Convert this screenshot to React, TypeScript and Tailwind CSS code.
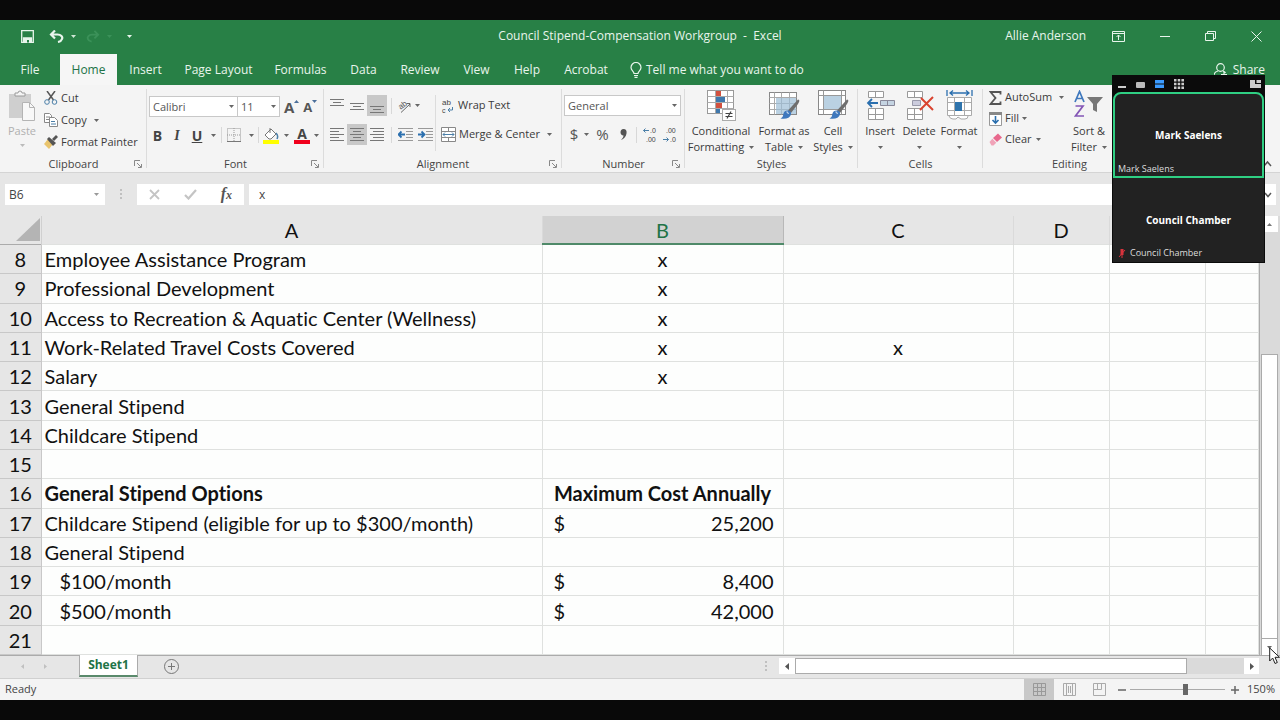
import { useState } from 'react'
import type { ReactNode } from 'react'

interface Row {
  n: number
  a?: string
  b?: string
  c?: string
  cost?: string
  bold?: boolean
  indent?: boolean
}

const ROWS: Row[] = [
  { n: 8, a: 'Employee Assistance Program', b: 'x' },
  { n: 9, a: 'Professional Development', b: 'x' },
  { n: 10, a: 'Access to Recreation & Aquatic Center (Wellness)', b: 'x' },
  { n: 11, a: 'Work-Related Travel Costs Covered', b: 'x', c: 'x' },
  { n: 12, a: 'Salary', b: 'x' },
  { n: 13, a: 'General Stipend' },
  { n: 14, a: 'Childcare Stipend' },
  { n: 15 },
  { n: 16, a: 'General Stipend Options', b: 'Maximum Cost Annually', bold: true },
  { n: 17, a: 'Childcare Stipend (eligible for up to $300/month)', cost: '25,200' },
  { n: 18, a: 'General Stipend' },
  { n: 19, a: '$100/month', cost: '8,400', indent: true },
  { n: 20, a: '$500/month', cost: '42,000', indent: true },
  { n: 21 },
]

const TABS = [
  { label: 'File', width: 'w-[60px]' },
  { label: 'Home', width: 'w-[57px]' },
  { label: 'Insert', width: 'w-[57px]' },
  { label: 'Page Layout', width: 'w-[89px]' },
  { label: 'Formulas', width: 'w-[75px]' },
  { label: 'Data', width: 'w-[51px]' },
  { label: 'Review', width: 'w-[62px]' },
  { label: 'View', width: 'w-[51px]' },
  { label: 'Help', width: 'w-[50px]' },
  { label: 'Acrobat', width: 'w-[68px]' },
]

function Caret({ className = 'text-[#666]' }: { className?: string }) {
  return (
    <svg width="5" height="3" viewBox="0 0 5 3" className={`shrink-0 ${className}`}>
      <path d="M0 0h5L2.5 3z" fill="currentColor" />
    </svg>
  )
}

function Sep() {
  return <span className="w-px h-4 bg-[#d8d8d8] shrink-0" />
}

function Group({ label, width, launcher, children }: { label: string; width: string; launcher?: boolean; children: ReactNode }) {
  return (
    <section className={`flex flex-col shrink-0 relative ${width}`}>
      <div className="h-[71px]">{children}</div>
      <div className="h-4 leading-4 text-center text-[#444]">{label}</div>
      <span className="absolute right-0 top-1 bottom-1 w-px bg-[#dcdcdc]" />
      {launcher && (
        <button aria-label={`${label} settings`} className="absolute right-[5px] bottom-1">
          <svg width="8" height="8" viewBox="0 0 8 8" fill="none" stroke="#888">
            <path d="M.5 6V.5H6M3 3l4 4M7.5 4v3.5H4" />
          </svg>
        </button>
      )}
    </section>
  )
}

function Combo({ value, label, className }: { value: string; label: string; className: string }) {
  return (
    <div className={`relative h-[21px] ${className}`}>
      <select
        aria-label={label}
        className="appearance-none w-full h-full pl-[3px] bg-white border border-[#c8c8c8] text-[#555] leading-[18px]"
      >
        <option>{value}</option>
      </select>
      <span className="absolute right-1 top-[9px] pointer-events-none"><Caret /></span>
    </div>
  )
}

function BigButton({ icon, lines, width }: { icon: ReactNode; lines: string[]; width: string }) {
  return (
    <button className={`flex flex-col items-center shrink-0 whitespace-nowrap ${width}`}>
      <span className="h-[33px] flex items-start justify-center">{icon}</span>
      <span className="h-4 leading-4">{lines[0]}</span>
      <span className="h-4 leading-4 flex items-center gap-[5px]">
        {lines[1]}
        <Caret />
      </span>
    </button>
  )
}

// horizontal rules used by all six alignment buttons
function LinesIcon({ rows }: { rows: [number, number, number][] }) {
  return (
    <svg width="14" height="16" viewBox="0 0 14 16" stroke="#777">
      {rows.map(([x1, x2, y]) => (
        <path key={y} d={`M${x1} ${y}H${x2}`} />
      ))}
    </svg>
  )
}

function IndentIcon({ right }: { right?: boolean }) {
  return (
    <svg width="15" height="16" viewBox="0 0 15 16" fill="none">
      <path d="M0 1.5h15M8 4.5h7M8 7.5h7M8 10.5h7M0 13.5h15" stroke="#999" />
      <path d={right ? 'M0 7.5h6M3.5 4.5l3 3-3 3' : 'M7 7.5H1M3.5 4.5l-3 3 3 3'} stroke="#2b6fae" strokeWidth="1.8" />
    </svg>
  )
}

function Brush() {
  return (
    <>
      <path d="M29 9.500c2 .5 1.500 2 0 4.500l-7 9-3-2.500z" fill="#6e6e6e" />
      <path d="M18.500 20.500c3 0 4 2 3.500 4-1 3.500-5 5-10.500 4 2.500-1 2.500-3 3-5 .5-2 2-3 4-3z" fill="#3f78bd" />
      <path d="M17.500 22c1.500 0 2 1 1.500 2" fill="none" stroke="#fff" />
    </>
  )
}

function TableStyleIcon({ cell }: { cell?: boolean }) {
  return (
    <svg width="31" height="31" viewBox="0 0 31 31">
      <rect x=".5" y={cell ? 0.5 : 2.5} width="27" height={cell ? 24 : 22} fill="#fff" stroke="#888" />
      {cell ? (
        <path d="M.5 5.500h27M5.500.5v24M.5 19.500h27M23.500.5v24" stroke="#999" />
      ) : (
        <path d="M.5 7.500h27M5.500 2.500v22M.5 13.500h27M.5 19.500h27M12.500 2.500v22M20.500 2.500v22" stroke="#aaa" />
      )}
      <rect x={cell ? 6 : 7} y={cell ? 6 : 8} width={cell ? 17 : 20} height={cell ? 13 : 16} fill="#9dbdd6" opacity=".7" />
      <Brush />
    </svg>
  )
}

function CondIcon() {
  return (
    <svg width="29" height="31" viewBox="0 0 29 31">
      <rect x=".5" y=".5" width="26" height="23" fill="#fff" stroke="#999" />
      <path d="M.5 6.500h26M.5 12.500h26M.5 18.500h26M8.500 .5v23M20.500 .5v23" stroke="#aaa" />
      <path d="M9 1h5v5H9zM9 13h6v5H9z" fill="#d2513f" />
      <path d="M9 7h9v5H9zM9 19h4v4H9z" fill="#3f78ad" />
      <rect x="15.500" y="19.500" width="13" height="11" fill="#fff" stroke="#aaa" />
      <path d="M18.500 23.500h7M18.500 26.500h7M24 21.500l-4 7" stroke="#444" strokeWidth="1.200" />
    </svg>
  )
}

function InsertIcon({ remove }: { remove?: boolean }) {
  return (
    <svg width="29" height="31" viewBox="0 0 29 31" fill="none">
      <path d="M2.500 1.500h15v6h-15zM9.500 1.500v6M2.500 18.500h15v11h-15zM9.500 18.500v11M2.500 24.500h15" fill="#fff" stroke="#999" />
      {remove ? (
        <>
          <path d="M7.500 10.500h8v5h-8z" fill="#ccd" stroke="#99a" />
          <path d="M16 8l12 12M28 7L15 20" stroke="#d9432f" strokeWidth="2" />
        </>
      ) : (
        <>
          <path d="M14.500 10.500h14v5h-14zM21.500 10.500v5" fill="#c5d4e2" stroke="#889" />
          <path d="M12 13H2M6 9l-4 4 4 4" stroke="#2b6fae" strokeWidth="1.800" />
        </>
      )}
    </svg>
  )
}

function FormatIcon() {
  return (
    <svg width="27" height="31" viewBox="0 0 27 31" fill="none">
      <path d="M1 0v6M26 0v6M4 3h19M7 .5L4 3l3 2.500M20 .5L23 3l-3 2.500" stroke="#2b6fae" strokeWidth="1.300" />
      <path d="M1.500 7.500h24v18h-24zM1.500 12.500h24M1.500 20.500h24M8.500 7.500v18M18.500 7.500v18" fill="#fff" stroke="#aaa" />
      <path d="M9 12h7v9H9z" fill="#2f74ad" />
      <path d="M3 26q1 3 4 3h3l2-2 3 2h4q3 0 3-3" fill="#fff" stroke="#aaa" />
    </svg>
  )
}

function Ribbon() {
  return (
    <div className="flex shrink-0 h-[88px] bg-[#f4f4f4] border-b border-[#d4d4d4] text-[#3b3b3b] relative overflow-hidden">
      <Group label="Clipboard" width="w-[147px]" launcher>
        <div className="flex pt-[5px]">
          <button className="w-11 flex flex-col items-center text-[#b0b0b0]">
            <svg width="28" height="32" viewBox="0 0 28 32">
              <rect x="1" y="4" width="22" height="24" fill="#cfcfcf" />
              <path d="M7 6V3h3a2 2 0 014 0h3v3z" fill="#f4f4f4" stroke="#9a9a9a" />
              <path d="M14.500 12.500h7l5 5v13h-12z" fill="#f8f8f8" stroke="#b4b4b4" />
              <path d="M21.500 12.500v5h5" fill="none" stroke="#b4b4b4" />
            </svg>
            <span className="h-[18px] leading-[18px]">Paste</span>
            <Caret className="text-[#bbb] mt-1" />
          </button>
          <div className="flex flex-col -mt-[3px]">
            <button className="flex items-center gap-[3px] h-[22px]">
              <svg width="14" height="14" viewBox="0 0 14 14" fill="none">
                <path d="M3 0l6.500 9M11 0L4.500 9" stroke="#555" strokeWidth="1.500" />
                <circle cx="3" cy="11" r="2.300" stroke="#4b7fa8" />
                <circle cx="10.500" cy="11" r="2.300" stroke="#4b7fa8" />
              </svg>
              Cut
            </button>
            <button className="flex items-center gap-[3px] h-[22px]">
              <svg width="14" height="14" viewBox="0 0 14 14" fill="#fff" stroke="#888">
                <path d="M.5.5h5l2 2v7h-7zM2 4h4M2 6.500h4" />
                <path d="M5.500 4.500h5l3 3v6h-8z" />
                <path d="M7 8.500h4M7 11h5" stroke="#4b7fa8" />
              </svg>
              Copy
              <Caret className="ml-1 text-[#666]" />
            </button>
            <button className="flex items-center gap-[3px] h-[22px] whitespace-nowrap">
              <svg width="14" height="14" viewBox="0 0 14 14">
                <path d="M0 9l4-5 5 5-4 5z" fill="#e9c46d" />
                <path d="M3 4l2-2 7 6-3 3z" fill="#555" />
                <path d="M8 4l4-4 2 2-4 4z" fill="#555" />
              </svg>
              Format Painter
            </button>
          </div>
        </div>
      </Group>

      <Group label="Font" width="w-[177px]" launcher>
        <div className="flex flex-col gap-2 pt-[11px] pl-[2px]">
          <div className="flex items-center h-[21px]">
            <Combo label="Font" value="Calibri" className="w-[89px]" />
            <Combo label="Font size" value="11" className="w-[43px] -ml-px" />
            <button className="ml-1 font-bold text-[15px] leading-5 text-[#555] flex" aria-label="Increase font size">
              A<Caret className="mt-[3px] text-[#4b6f9a] rotate-180" />
            </button>
            <button className="ml-1 font-bold text-[13px] leading-5 text-[#555] flex" aria-label="Decrease font size">
              A<Caret className="mt-[3px] text-[#4b6f9a]" />
            </button>
          </div>
          <div className="flex items-center h-5 text-[#444] text-[14px]">
            <button className="w-[17px] font-bold">B</button>
            <button className="w-[22px] font-bold italic font-['Liberation_Serif',serif]">I</button>
            <button className="w-[18px] font-bold underline">U</button>
            <span className="w-[15px] flex justify-center"><Caret /></span>
            <Sep />
            <button className="w-[23px] flex justify-center" aria-label="Borders">
              <svg width="14" height="14" viewBox="0 0 14 14" fill="none" stroke="#999">
                <path d="M.5.5h13v13H.5zM7 0v14M0 7h14" strokeDasharray="1 1" />
                <path d="M0 13.500h14" stroke="#777" />
              </svg>
            </button>
            <span className="w-[13px] flex justify-center"><Caret /></span>
            <Sep />
            <button className="w-[24px] flex justify-center" aria-label="Fill color">
              <svg width="16" height="17" viewBox="0 0 16 17" fill="none">
                <path d="M2 8l6-6 5 5-5 5H6z" fill="#fff" stroke="#777" />
                <path d="M7 6V1" stroke="#777" />
                <path d="M13 6c2 2 2 4 1 6" stroke="#4b7fa8" strokeWidth="1.500" />
                <path d="M0 13h16v4H0z" fill="#ffff00" />
              </svg>
            </button>
            <span className="w-[7px] flex justify-center"><Caret /></span>
            <button className="w-[24px] flex flex-col items-center font-bold leading-[13px]" aria-label="Font color">
              <span>A</span>
              <span className="w-4 h-1 bg-[#f0001c]" />
            </button>
            <Caret />
          </div>
        </div>
      </Group>

      <Group label="Alignment" width="w-[238px]" launcher>
        <div className="flex h-full">
          <div className="flex flex-col gap-2 pt-[10px] pl-[3px] w-[111px]">
            <div className="flex items-center h-[21px]">
              <button className="w-5 h-5 flex justify-center items-center" aria-label="Top align"><LinesIcon rows={[[0, 14, 1.5], [3, 11, 4.5], [0, 14, 7.5]]} /></button>
              <button className="w-5 h-5 flex justify-center items-center" aria-label="Middle align"><LinesIcon rows={[[0, 14, 5.5], [3, 11, 8.5], [0, 14, 11.5]]} /></button>
              <button className="w-5 h-[21px] flex justify-center items-center bg-[#c8c8c8]" aria-label="Bottom align"><LinesIcon rows={[[0, 14, 8.5], [3, 11, 11.5], [0, 14, 14.5]]} /></button>
              <span className="w-2 flex justify-center"><Sep /></span>
              <button className="flex items-center gap-[2px]" aria-label="Orientation">
                <svg width="18" height="18" viewBox="0 0 18 18" fill="none" stroke="#666">
                  <text x="4" y="10" fontSize="8" fontFamily="Liberation Sans" fill="#555" stroke="none" transform="rotate(-35 9 9)">ab</text>
                  <path d="M6 15.500L15 7M11.500 6.500H15V10" />
                </svg>
                <Caret />
              </button>
            </div>
            <div className="flex items-center h-[21px]">
              <button className="w-5 h-5 flex justify-center items-center" aria-label="Align left"><LinesIcon rows={[[0, 14, 1.5], [0, 9, 4.5], [0, 14, 7.5], [0, 9, 10.5], [0, 14, 13.5]]} /></button>
              <button className="w-5 h-[21px] flex justify-center items-center bg-[#c8c8c8]" aria-label="Center"><LinesIcon rows={[[0, 14, 1.5], [3, 11, 4.5], [0, 14, 7.5], [3, 11, 10.5], [0, 14, 13.5]]} /></button>
              <button className="w-5 h-5 flex justify-center items-center" aria-label="Align right"><LinesIcon rows={[[0, 14, 1.5], [3, 14, 4.5], [0, 14, 7.5], [3, 14, 10.5], [0, 14, 13.5]]} /></button>
              <span className="w-2 flex justify-center"><Sep /></span>
              <button className="w-5 flex justify-center" aria-label="Decrease indent"><IndentIcon /></button>
              <button className="w-5 flex justify-center" aria-label="Increase indent"><IndentIcon right /></button>
            </div>
          </div>
          <span className="w-px h-14 mt-[10px] bg-[#dcdcdc]" />
          <div className="flex flex-col gap-2 pt-[10px] pl-[5px]">
            <button className="flex items-center h-[21px] gap-[3px]">
              <svg width="14" height="18" viewBox="0 0 14 18" fill="none">
                <text x="1" y="8" fontSize="8" fontFamily="Liberation Sans" fill="#444">ab</text>
                <text x="1" y="16" fontSize="7" fontFamily="Liberation Sans" fill="#444">c</text>
                <path d="M11.500 10v3H7M9 11l-2 2 2 2" stroke="#4b7fa8" />
              </svg>
              Wrap Text
            </button>
            <button className="flex items-center h-[21px] gap-[3px] whitespace-nowrap">
              <svg width="15" height="15" viewBox="0 0 15 15" fill="none">
                <path d="M.5.5h14v14H.5zM.5 4.500h14M.5 10.500h14M7.500 .5v4M7.500 10.500v4" fill="#fff" stroke="#888" />
                <path d="M2 7.500h11M4 5.500l-2 2 2 2M11 5.500l2 2-2 2" stroke="#4b7fa8" />
              </svg>
              Merge &amp; Center
              <Caret className="ml-1 text-[#666]" />
            </button>
          </div>
        </div>
      </Group>

      <Group label="Number" width="w-[123px]" launcher>
        <div className="flex flex-col gap-2 pt-[10px] pl-[2px] pr-1">
          <Combo label="Number format" value="General" className="w-full" />
          <div className="flex items-center h-[21px] text-[#555] text-[15px]">
            <button className="w-[20px]">$</button>
            <Caret />
            <button className="w-[27px]">%</button>
            <button className="w-[14px] flex justify-center" aria-label="Comma style">
              <svg width="7" height="11" viewBox="0 0 7 11">
                <path d="M3.500 0C6 0 7 2 6.500 4.500 6 7.500 4 10 1 11 3 9 3.500 7.500 3.500 6.500 1.500 6.500.5 5 .5 3.300.5 1.500 1.500 0 3.500 0z" fill="#555" />
              </svg>
            </button>
            <span className="w-[12px] flex justify-center"><Sep /></span>
            <button className="w-[17px]" aria-label="Increase decimal">
              <svg width="17" height="19" viewBox="0 0 17 19" fill="none" fontFamily="Liberation Sans">
                <text x="8" y="8" fontSize="7" fill="#444">.0</text>
                <text x="4" y="17" fontSize="7" fill="#444">.00</text>
                <path d="M7 5.500H1.500M3.500 3.500l-2 2 2 2" stroke="#4b7fa8" />
              </svg>
            </button>
            <button className="w-[17px] ml-[3px]" aria-label="Decrease decimal">
              <svg width="17" height="19" viewBox="0 0 17 19" fill="none" fontFamily="Liberation Sans">
                <text x="4" y="8" fontSize="7" fill="#444">.00</text>
                <text x="8" y="17" fontSize="7" fill="#444">.0</text>
                <path d="M1 14.500h5.500M4.500 12.500l2 2-2 2" stroke="#4b7fa8" />
              </svg>
            </button>
          </div>
        </div>
      </Group>

      <Group label="Styles" width="w-[173px]">
        <div className="flex pt-[5px]">
          <BigButton width="w-[72px]" icon={<CondIcon />} lines={['Conditional', 'Formatting']} />
          <BigButton width="w-[54px]" icon={<TableStyleIcon />} lines={['Format as', 'Table']} />
          <BigButton width="w-[44px]" icon={<TableStyleIcon cell />} lines={['Cell', 'Styles']} />
        </div>
      </Group>

      <Group label="Cells" width="w-[125px]">
        <div className="flex pt-[5px] pl-[2px]">
          <BigButton width="w-10" icon={<InsertIcon />} lines={['Insert', '']} />
          <BigButton width="w-[38px]" icon={<InsertIcon remove />} lines={['Delete', '']} />
          <BigButton width="w-[42px]" icon={<FormatIcon />} lines={['Format', '']} />
        </div>
      </Group>

      <Group label="Editing" width="w-[173px]">
        <div className="flex">
          <div className="flex flex-col pl-[6px] pt-[2px] w-[83px]">
            <button className="flex items-center h-[21px] gap-[3px]">
              <svg width="13" height="14" viewBox="0 0 13 14" fill="none" stroke="#555" strokeWidth="1.800">
                <path d="M11.500 3.500V1H1.500l5 6-5 6h10v-2.500" />
              </svg>
              AutoSum
              <Caret className="ml-1 text-[#666]" />
            </button>
            <button className="flex items-center h-[21px] gap-[3px]">
              <svg width="13" height="14" viewBox="0 0 13 14" fill="none">
                <path d="M.5.5h12v13H.5z" fill="#fff" stroke="#999" />
                <path d="M0 0h13v3H0z" fill="#888" />
                <path d="M6.500 4v7M3.500 8l3 3 3-3" stroke="#2b6fae" strokeWidth="1.600" />
              </svg>
              Fill
              <Caret className="text-[#666]" />
            </button>
            <button className="flex items-center h-[21px] gap-[3px]">
              <svg width="13" height="13" viewBox="0 0 13 13">
                <path d="M4 5l5-4.500 4 4L8 9z" fill="#e8688d" />
                <path d="M3.300 5.700L7.300 9.700 4.500 12.500H2.500L.5 9z" fill="#f0a3b8" />
              </svg>
              Clear
              <Caret className="ml-px text-[#666]" />
            </button>
          </div>
          <div className="flex pt-[5px]">
            <BigButton
              width="w-[46px]"
              icon={
                <svg width="30" height="28" viewBox="0 0 30 28" fill="none">
                  <path d="M1 12L5.500 1.500 10 12M2.500 8.500h6" stroke="#3f78bd" strokeWidth="1.700" />
                  <path d="M1.500 16H9L1.500 26H10" stroke="#8355b5" strokeWidth="1.700" />
                  <path d="M13 7h16l-6 7v8l-4-2v-6z" fill="#777" />
                </svg>
              }
              lines={['Sort &', 'Filter']}
            />
            <BigButton
              width="w-[44px]"
              icon={
                <svg width="26" height="28" viewBox="0 0 26 28" fill="none" stroke="#777" strokeWidth="2">
                  <circle cx="15" cy="10" r="7" />
                  <path d="M10 15l-7 8" />
                </svg>
              }
              lines={['Find &', 'Select']}
            />
          </div>
        </div>
      </Group>
      <button aria-label="Collapse ribbon" className="absolute right-2 bottom-1">
        <svg width="9" height="8" viewBox="0 0 9 8" fill="none" stroke="#555" strokeWidth="1.500">
          <path d="M1 6l3.500-4L8 6" />
        </svg>
      </button>
    </div>
  )
}

function FormulaBar() {
  return (
    <div className="flex shrink-0 h-[43px] pt-[11px] pl-[5px] pr-1 text-[12px] text-[#444]">
      <div className="relative w-[100px] h-[21px]">
        <input aria-label="Name box" defaultValue="B6" className="w-full h-full pl-1 bg-white" />
        <span className="absolute right-[6px] top-[9px]"><Caret className="text-[#999]" /></span>
      </div>
      <span className="w-8 h-[21px] flex justify-center items-center">
        <svg width="2" height="11" viewBox="0 0 2 11" fill="#c0c0c0">
          <path d="M0 0h2v2H0zM0 4h2v2H0zM0 8h2v2H0z" />
        </svg>
      </span>
      <div className="w-[107px] h-[21px] bg-white flex items-center justify-between pl-3 pr-3">
        <button aria-label="Cancel">
          <svg width="11" height="11" viewBox="0 0 11 11" stroke="#c4c4c4" strokeWidth="1.800"><path d="M1 1l9 9M10 1l-9 9" /></svg>
        </button>
        <button aria-label="Enter">
          <svg width="13" height="11" viewBox="0 0 13 11" fill="none" stroke="#c4c4c4" strokeWidth="2.200"><path d="M1 6l3.500 3.500L12 1" /></svg>
        </button>
        <button className="italic font-bold font-['Liberation_Serif',serif] text-[16px] leading-5 text-[#555]">
          f<span className="text-[12px]">x</span>
        </button>
      </div>
      <div className="relative flex-1 h-[21px] ml-[5px]">
        <input aria-label="Formula bar" defaultValue="x" className="w-full h-full pl-[10px] bg-white" />
        <svg className="absolute right-1 top-2" width="8" height="6" viewBox="0 0 8 6" fill="none" stroke="#555" strokeWidth="1.500">
          <path d="M1 1l3 3.500L7 1" />
        </svg>
      </div>
    </div>
  )
}

function Sheet() {
  return (
    <div className="flex flex-1 min-h-0 font-['Lato',sans-serif] text-[20px] text-[#111] [font-variant-ligatures:none]">
      <table className="flex-1 h-full table-fixed border-collapse w-0 leading-[26px]">
        <colgroup>
          <col className="w-[41px]" />
          <col className="w-[501px]" />
          <col className="w-[241px]" />
          <col className="w-[230px]" />
          <col className="w-[96px]" />
          <col className="w-[96px]" />
          <col />
        </colgroup>
        <thead>
          <tr className="h-[28px] bg-[#e6e6e6] border-b border-[#ababab]">
            <th className="p-0 border-r border-[#d0d0d0]">
              <svg width="24" height="23" viewBox="0 0 24 23" className="ml-auto mr-px"><path d="M24 0v23H0z" fill="#b4b4b4" /></svg>
            </th>
            {['A', 'B', 'C', 'D', '', ''].map((c, i) => (
              <th
                key={i}
                className={
                  c === 'B'
                    ? 'p-0 font-normal bg-[#d2d2d2] text-[#217346] border-x border-[#b8b8b8] border-b-2 border-b-[#4f8a69]'
                    : 'p-0 font-normal border-r border-[#dadada]'
                }
              >
                {c}
              </th>
            ))}
          </tr>
        </thead>
        <tbody className="bg-[#fdfefd]">
          {ROWS.map(r => (
            <tr key={r.n} className={r.bold ? 'font-bold' : ''}>
              <th className="p-0 font-normal bg-[#e6e6e6] border-r border-b border-[#c8c8c8]">{r.n}</th>
              <td className={r.indent ? 'p-0 pl-[18px] border border-[#dfe1df] whitespace-nowrap' : 'p-0 pl-[3px] border border-[#dfe1df] whitespace-nowrap'}>{r.a}</td>
              <td className="p-0 border border-[#dfe1df] text-center whitespace-nowrap">
                {r.cost ? (
                  <div className="flex justify-between pl-[11px] pr-[9px]">
                    <span>$</span>
                    <span>{r.cost}</span>
                  </div>
                ) : (
                  r.b
                )}
              </td>
              <td className="p-0 border border-[#dfe1df] text-center">{r.c}</td>
              <td className="border border-[#dfe1df]" />
              <td className="border border-[#dfe1df]" />
              <td className="border border-[#dfe1df]" />
            </tr>
          ))}
        </tbody>
      </table>
      <div className="w-[21px] shrink-0 flex flex-col border-l border-[#ababab] bg-[#dadada] pl-px pr-[2px]">
        <button aria-label="Scroll up" className="h-4 bg-white flex items-center justify-center">
          <Caret className="rotate-180 text-[#777]" />
        </button>
        <div className="flex-[123]" />
        <div className="flex-[284] bg-white border border-[#ababab]" />
        <button aria-label="Scroll down" className="h-4 bg-white border-x border-[#ababab] flex items-center justify-center">
          <Caret />
        </button>
      </div>
    </div>
  )
}

function SheetTabs() {
  return (
    <div className="flex shrink-0 h-[23px] border-t border-[#ababab]">
      <div className="w-[79px] h-5 flex items-center gap-[18px] pl-5 text-[#c0c0c0]">
        <button aria-label="Previous sheet"><Caret className="rotate-90" /></button>
        <button aria-label="Next sheet"><Caret className="-rotate-90" /></button>
      </div>
      <button className="-mt-px w-[59px] h-[22px] bg-white border-x border-[#ababab] border-b-2 border-b-[#5a8a6c] text-[12px] leading-[20px] font-bold text-[#217346]">Sheet1</button>
      <button aria-label="New sheet" className="ml-[26px] h-5">
        <svg width="15" height="15" viewBox="0 0 15 15" fill="none" stroke="#777">
          <circle cx="7.500" cy="7.500" r="7" />
          <path d="M7.500 4v7M4 7.500h7" />
        </svg>
      </button>
      <svg className="ml-auto mt-[5px]" width="2" height="11" viewBox="0 0 2 11" fill="#c0c0c0"><path d="M0 0h2v2H0zM0 4h2v2H0zM0 8h2v2H0z" /></svg>
      <div className="flex w-[480px] h-4 mt-[2px] ml-3 mr-[21px] bg-[#dadada]">
        <button aria-label="Scroll left" className="w-4 bg-white flex items-center justify-center">
          <svg width="4" height="7" viewBox="0 0 4 7"><path d="M4 0v7L0 3.500z" fill="#555" /></svg>
        </button>
        <div className="w-[392px] bg-white border border-[#ababab]" />
        <button aria-label="Scroll right" className="ml-auto w-[15px] bg-white flex items-center justify-center">
          <svg width="4" height="7" viewBox="0 0 4 7"><path d="M0 0v7l4-3.500z" fill="#555" /></svg>
        </button>
      </div>
    </div>
  )
}

function StatusBar() {
  const [zoom, setZoom] = useState(59)
  return (
    <div className="flex shrink-0 items-center h-[22px] bg-[#f4f4f4] border-t border-[#d0d0d0] pl-[5px] pr-[5px] text-[#444]">
      <span>Ready</span>
      <div className="ml-auto flex items-center h-full">
        <button aria-label="Normal view" className="w-[30px] h-full bg-[#c8c8c8] flex items-center justify-center">
          <svg width="13" height="13" viewBox="0 0 13 13" fill="none" stroke="#999"><path d="M.5.500h12v12H.5zM.5 4.500h12M.5 8.500h12M4.500.5v12M8.500.5v12" /></svg>
        </button>
        <button aria-label="Page layout view" className="w-[30px] flex justify-center">
          <svg width="13" height="13" viewBox="0 0 13 13" fill="none" stroke="#aaa"><path d="M.5.5h12v12H.5zM3.500 1v11M9.500 1v11M5.500 3v7M7.500 3v7" /></svg>
        </button>
        <button aria-label="Page break preview" className="w-[30px] flex justify-center">
          <svg width="13" height="13" viewBox="0 0 13 13" fill="none" stroke="#aaa"><path d="M.5.5h12v12H.5zM.5 6.500h8M4.500.5v6M8.500.5v6" /></svg>
        </button>
        <button aria-label="Zoom out" className="w-[16px] flex justify-center">
          <svg width="8" height="8" viewBox="0 0 8 8" stroke="#666" strokeWidth="1.500"><path d="M0 4h8" /></svg>
        </button>
        <input
          type="range"
          aria-label="Zoom"
          value={zoom}
          onChange={e => setZoom(Number(e.target.value))}
          className="appearance-none w-[95px] h-[11px] bg-[linear-gradient(#aaa,#aaa)] bg-[length:100%_1px] bg-center bg-no-repeat [&::-webkit-slider-thumb]:appearance-none [&::-webkit-slider-thumb]:w-[5px] [&::-webkit-slider-thumb]:h-[11px] [&::-webkit-slider-thumb]:bg-[#666]"
        />
        <button aria-label="Zoom in" className="w-[20px] flex justify-center">
          <svg width="8" height="8" viewBox="0 0 8 8" stroke="#666" strokeWidth="1.500"><path d="M0 4h8M4 0v8" /></svg>
        </button>
        <span className="w-[30px] text-right">150%</span>
      </div>
    </div>
  )
}

// floating video call panel
function CallPanel() {
  return (
    <aside className="absolute right-[15px] top-[75px] w-[153px] bg-[#0b0b0b] p-px text-white">
      <div className="flex items-center h-4 pl-[5px] pr-[3px] gap-[10px]">
        <svg width="8" height="10" viewBox="0 0 8 10"><path d="M0 7h8v2H0z" fill="#ccc" /></svg>
        <svg width="9" height="10" viewBox="0 0 9 10"><rect y="3" width="9" height="6" rx="1" fill="#bbb" /></svg>
        <svg width="9" height="10" viewBox="0 0 9 10" fill="#3b9bff"><path d="M0 1h9v3.500H0zM0 5.500h9V9H0z" /></svg>
        <svg width="10" height="10" viewBox="0 0 10 10" fill="#ccc">
          <path d="M0 0h2.500v2.500H0zM3.700 0h2.500v2.500H3.700zM7.400 0H10v2.500H7.400zM0 3.700h2.500v2.500H0zM3.700 3.700h2.500v2.500H3.700zM7.400 3.700H10v2.500H7.400zM0 7.400h2.500V10H0zM3.700 7.400h2.500V10H3.700zM7.400 7.400H10V10H7.400z" />
        </svg>
        <svg className="ml-auto" width="11" height="8" viewBox="0 0 11 8"><path d="M0 0h5v4h6v4H0zM6.500 0H11v3H6.500z" fill="#ccc" /></svg>
      </div>
      <div className="relative h-[86px] bg-[#222] border-2 border-[#2fcf83] rounded-t-lg flex items-center justify-center font-bold text-[10px]">
        Mark Saelens
        <span className="absolute left-[3px] bottom-0 text-[9px] leading-[14px] font-normal text-[#ddd]">Mark Saelens</span>
      </div>
      <div className="relative h-[84px] bg-[#222] flex items-center justify-center font-bold text-[10px]">
        Council Chamber
        <span className="absolute left-[5px] bottom-[2px] text-[9px] leading-[14px] font-normal text-[#ddd] flex items-center gap-1 whitespace-nowrap">
          <svg width="8" height="9" viewBox="0 0 8 9"><path d="M2.500 0h3v6h-3zM3.500 6h1v3h-1z" fill="#d8333c" /><path d="M1 8l6-7" stroke="#d8333c" /></svg>
          Council Chamber
        </span>
      </div>
    </aside>
  )
}

export default function App() {
  const [tab, setTab] = useState('Home')

  return (
    <div className="relative h-screen overflow-hidden bg-[#090909] py-5 font-['Open_Sans',sans-serif] text-[11px]">
      <div className="flex flex-col h-full bg-[#e6e6e6]">
        {/* Title bar */}
        <header className="grid grid-cols-[1fr_auto_1fr] items-center shrink-0 h-[34px] pb-[2px] bg-[#288046] text-[#e8f5ec]">
          <div className="flex items-center pl-[21px]">
            <button aria-label="Save">
              <svg width="13" height="13" viewBox="0 0 13 13" fill="none" stroke="currentColor" strokeWidth="1.300">
                <path d="M.7.7h11.600v11.600H.7z" />
                <path d="M2.500 8h8v4.500h-8z" fill="currentColor" />
                <path d="M6 10h2v2.500H6z" fill="#288046" stroke="none" />
              </svg>
            </button>
            <button aria-label="Undo" className="ml-[15px]">
              <svg width="15" height="13" viewBox="0 0 15 13" fill="none" stroke="currentColor" strokeWidth="2.200">
                <path d="M6 .5L2 4.500l4 4M2 4.500h6.500C12 4.500 14 7 13 9c-.6 1.800-2 2.600-4 3" />
              </svg>
            </button>
            <Caret className="ml-[7px] text-[#cfe6d6]" />
            <button aria-label="Redo" className="ml-[10px] text-[#3b9159]">
              <svg width="14" height="13" viewBox="0 0 15 13" fill="none" stroke="currentColor" strokeWidth="2">
                <path d="M9 .5l4 4-4 4M13 4.500H6.500C3 4.500 1 7 2 9c.6 1.800 2 2.600 4 3" />
              </svg>
            </button>
            <Caret className="ml-[7px] text-[#3b9159]" />
            <Caret className="ml-[15px] text-[#e8f5ec]" />
          </div>
          <h1 className="text-[12px] whitespace-pre">Council Stipend-Compensation Workgroup  -  Excel</h1>
          <div className="flex items-center justify-end pr-[18px]">
            <span className="text-[12px]">Allie Anderson</span>
            <button aria-label="Ribbon display options" className="ml-[26px]">
              <svg width="13" height="11" viewBox="0 0 13 11" fill="none" stroke="currentColor"><path d="M.5.5h12v10H.5zM.5 2.500h12M6.500 9V4M4.500 6l2-2 2 2" /></svg>
            </button>
            <button aria-label="Minimize" className="ml-[35px]">
              <svg width="10" height="10" viewBox="0 0 10 10" stroke="currentColor"><path d="M0 5.500h10" /></svg>
            </button>
            <button aria-label="Restore" className="ml-[35px]">
              <svg width="11" height="11" viewBox="0 0 11 11" fill="none" stroke="currentColor"><path d="M.5 2.500h8v7h-8zM2.500 2.500v-2h8v7h-2" /></svg>
            </button>
            <button aria-label="Close" className="ml-[35px]">
              <svg width="11" height="11" viewBox="0 0 11 11" stroke="currentColor"><path d="M.5.5l10 10M10.500.5l-10 10" /></svg>
            </button>
          </div>
        </header>

        {/* Ribbon tabs */}
        <nav className="flex items-center shrink-0 h-[31px] bg-[#288046] text-[#e8f5ec] text-[12px] whitespace-nowrap">
          {TABS.map(t => (
            <button
              key={t.label}
              onClick={() => setTab(t.label)}
              className={`h-full shrink-0 ${t.width} ${t.label === tab ? 'bg-[#f6f6f6] text-[#217346]' : ''}`}
            >
              {t.label}
            </button>
          ))}
          <button className="flex items-center gap-1 ml-[10px]">
            <svg width="12" height="16" viewBox="0 0 12 16" fill="none" stroke="currentColor" strokeWidth="1.200">
              <path d="M4 11.500c0-2-3-3-3-6a5 5 0 0110 0c0 3-3 4-3 6zM4 13.500h4M4.500 15.400h3" />
            </svg>
            Tell me what you want to do
          </button>
          <button className="flex items-center gap-[6px] ml-auto mr-[15px]">
            <svg width="13" height="13" viewBox="0 0 13 13" fill="none" stroke="currentColor" strokeWidth="1.200">
              <circle cx="6.500" cy="4.500" r="3.800" />
              <path d="M0 12.500c0-2.500 2-4 4-4.500M9 8c1 .5 2 1 2.500 2M7 11.500h6M10 8.500v4.500" />
            </svg>
            Share
          </button>
        </nav>

        <Ribbon />
        <FormulaBar />
        <Sheet />
        <SheetTabs />
        <StatusBar />
      </div>

      <CallPanel />

      {/* Mouse pointer */}
      <svg className="absolute right-0 bottom-[55px]" width="11" height="18" viewBox="0 0 11 18">
        <path d="M.7 1v13l3-3 2.300 5.500 2.300-1L6 10.300h4.500z" fill="#fff" stroke="#222" />
      </svg>
    </div>
  )
}
